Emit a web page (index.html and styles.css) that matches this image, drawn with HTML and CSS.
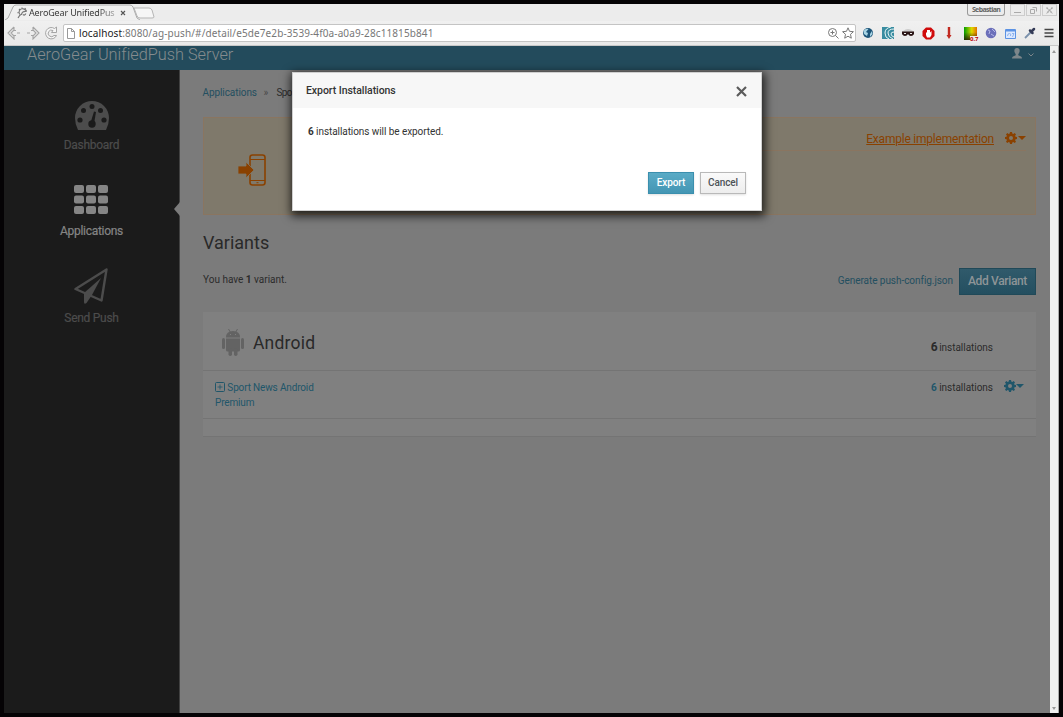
FILE: index.html
```html
<!DOCTYPE html>
<html lang="en">
<head>
<meta charset="utf-8">
<title>AeroGear UnifiedPush Server</title>
<link rel="stylesheet" href="styles.css">
</head>
<body>
<svg class="defs" width="0" height="0">
  <symbol id="gear" viewBox="0 0 12 12"><path fill-rule="evenodd" d="M5 0h2l.3 1.600 1 .4 1.400-.9 1.300 1.300-.9 1.400.4 1L12 5v2l-1.500.3-.4 1 .9 1.400-1.300 1.300-1.400-.9-1 .4L7 12H5l-.3-1.500-1-.4-1.400.9L1 9.700l.9-1.400-.4-1L0 7V5l1.500-.2.4-1L1 2.400l1.300-1.300 1.400.9 1-.4zM6 4a2 2 0 1 0 0 4 2 2 0 0 0 0-4z"/></symbol>
</svg>
<div class="window">
  <div class="tabstrip">
    <div class="tab">
      <svg class="tab-shape" width="142" height="16" viewBox="0 0 142 16"><path d="M0 16 3 14 8 3Q9 1 11 1H125Q127 1 128 3L132 14 135 16" fill="#f0f0f0" stroke="#aaa"/></svg>
      <div class="tab-content">
        <svg width="11" height="12" viewBox="0 0 11 12"><path d="M9.500 4.500C9 1.500 4 .7 2.500 3.500c-1 2 .2 4 1.500 4.700M1 11l2-3M4.500 8c0-3 2-4 5-3.500M6 7.500c1 1 2.500.5 2.700-1M.5 5.500l1 .5M2 2l1 1M5 .5v1.500M8.500 1 8 2" fill="none" stroke="#777" stroke-width="1.200"/></svg>
        <span class="tab-title">AeroGear UnifiedPus</span>
        <svg width="6" height="6" viewBox="0 0 6 6"><path d="M1 1l4 4M5 1 1 5" stroke="#555" stroke-width="1.100"/></svg>
      </div>
    </div>
    <svg class="newtab" width="22" height="12" viewBox="0 0 22 12"><path d="M1 1h15q2 0 3 2l2 7q0 1-2 1H7q-2 0-3-2z" fill="#f6f6f6" stroke="#b5b5b5"/></svg>
    <div class="spacer"></div>
    <div class="user-badge">Sebastian</div>
    <div class="winbtn"><svg width="9" height="9"><path d="M1 6.500h7" stroke="#aaa"/></svg></div>
    <div class="winbtn"><svg width="9" height="9" fill="none" stroke="#aaa"><path d="M1.500 3.500h4v4h-4zM3.500 1.500h4v4"/></svg></div>
    <div class="winbtn"><svg width="9" height="9"><path d="M1.500 1.500l6 6M7.500 1.500l-6 6" stroke="#aaa" stroke-width="1.500" stroke-dasharray="2 .7"/></svg></div>
  </div>
  <div class="toolbar">
    <div class="nav-icons">
      <svg width="14" height="14" viewBox="0 0 14 14"><path d="M7 1 1 7l6 6V9.500h2M7 1v3.500h2M7 4 4 7l3 3M10 7h3" fill="none" stroke="#a5a5a5" stroke-width="1.100"/></svg>
      <svg width="14" height="14" viewBox="0 0 14 14"><path d="M7 1l6 6-6 6V9.500H5M7 1v3.500H5M7 4l3 3-3 3M4 7H1" fill="none" stroke="#a5a5a5" stroke-width="1.100"/></svg>
      <svg width="14" height="14" viewBox="0 0 14 14"><path d="M10.500 2.500A5.700 5.700 0 1 0 12.500 9.500H10A3.300 3.300 0 1 1 9 4.500L7.500 6.500h5V1z" fill="#f6f6f6" stroke="#a5a5a5"/></svg>
    </div>
    <div class="omnibox">
      <svg width="8" height="11" viewBox="0 0 8 11"><path d="M.5.500h4l3 3v7h-7zM4.500.5v3h3" fill="#fff" stroke="#999"/></svg>
      <span class="url"><b>localhost</b>:8080/ag-push/#/detail/e5de7e2b-3539-4f0a-a0a9-28c11815b841</span>
      <svg width="11" height="11" viewBox="0 0 11 11" fill="none" stroke="#777"><circle cx="4.500" cy="4.500" r="4"/><path d="M7.500 7.500l3 3M2.500 4.500h4M4.500 2.500v4"/></svg>
      <svg width="12" height="12" viewBox="0 0 12 12"><path d="M6 .8l1.500 3.500 3.900.4-2.900 2.600.8 3.900L6 9.200l-3.300 2 .8-3.900L.6 4.700l3.900-.4z" fill="#fff" stroke="#777"/></svg>
    </div>
    <div class="extensions">
      <svg width="12" height="12" viewBox="0 0 12 12"><circle cx="6" cy="6" r="5" fill="#1c5478"/><path d="M1.500 4q2-3 5-2L4 5l2 1-1 3-3-2zM8 7l2-3 .5 3L8 10z" fill="#a8d4e4"/></svg>
      <svg width="12" height="12" viewBox="0 0 12 12"><path fill="#398ca0" d="M0 0h12v12H0z"/><path d="M12 2Q6 2 6 6t5 6M12 5Q9 5 9 7t3 3M9 0Q3 1 3 6t4 6" fill="none" stroke="#e8f5f5"/></svg>
      <svg width="12" height="12" viewBox="0 0 12 12"><path d="M1 4Q6 0 11 4l1 1v3H0V5z" fill="#ccc"/><path d="M0 4.500h12V7q-1 2-3 2-2 0-3-2-1 2-3 2T0 7z" fill="#2b1515"/><path d="M2 6.500h2M8 6.500h2" stroke="#eee"/></svg>
      <svg width="13" height="13" viewBox="0 0 13 13"><path d="M4 .5h5L12.500 4v5L9 12.500H4L.5 9V4z" fill="#d00b0b"/><path d="M4 5v3l1 2.500h3L9.500 8V4L8 5.500V3H5v3z" fill="#fff"/></svg>
      <svg width="12" height="12" viewBox="0 0 12 12"><path d="M4.800 0h2.400v8h1.300L6 12 3.500 8h1.300z" fill="#c22a20"/></svg>
      <div class="palette"><span>0.7</span></div>
      <svg width="12" height="12" viewBox="0 0 12 12"><circle cx="6" cy="6" r="5.300" fill="#6c70ba"/><path d="M3 3l2 1-1 3M7 2l3 3M6 7l3 2" stroke="#b5b8e8" fill="none"/></svg>
      <svg width="11" height="11" viewBox="0 0 11 11"><path d="M.5 1.500h10v9H.5z" fill="#dce9ff" stroke="#5c93e4"/><path d="M1 2.500h9" stroke="#5c93e4" stroke-width="2"/><path d="M2.500 8q0-2.500 2-2.500t1 2.500M7 5.500h2L7.500 9" fill="none" stroke="#8db3ee"/></svg>
      <svg width="12" height="12" viewBox="0 0 12 12"><path d="M1 11l6-6" stroke="#7b91ac" stroke-width="1.800"/><path d="M6 3.500 8.500 6M8 4l2-2" stroke="#333a55" stroke-width="2.500" stroke-linecap="round"/></svg>
      <svg width="10" height="10" viewBox="0 0 10 10"><path d="M.5 1.500h9M.5 5h9M.5 8.500h9" stroke="#444" stroke-width="1.700"/></svg>
    </div>
  </div>
  <div class="viewport">
    <div class="page">
      <header class="masthead">
        <span class="brand">AeroGear UnifiedPush Server</span>
        <div class="usermenu">
          <svg width="10" height="11" viewBox="0 0 10 11"><path d="M5 0q3 0 2.600 3.500Q7 5.500 6.300 6v1.200L9 8.500q1 .5 1 2H0q0-1.500 1-2l2.700-1.300V6Q3 5.500 2.400 3.500 2 0 5 0z" fill="#7d868a"/></svg>
          <svg width="6" height="4" viewBox="0 0 6 4"><path d="M.5.500 3 3 5.500.5" fill="none" stroke="#7d868a"/></svg>
        </div>
      </header>
      <div class="columns">
        <nav class="sidebar">
          <div class="nav-item dash">
            <svg width="34" height="29" viewBox="0 0 34 29"><path d="M3 29Q0 23 0 17a17 17 0 0 1 34 0q0 6-3 12z" fill="#4c4c4c"/><g fill="#1b1b1b"><circle cx="5" cy="19" r="2.600"/><circle cx="8.500" cy="9.500" r="2.500"/><circle cx="17" cy="5.500" r="2.500"/><circle cx="25.500" cy="9.500" r="2.500"/><circle cx="29" cy="19" r="2.600"/><circle cx="17" cy="23" r="3.700"/><path d="M15.500 22 19 10.500l2 .5-2 12z"/></g></svg>
            <span>Dashboard</span>
          </div>
          <div class="nav-item apps">
            <svg width="34" height="29" viewBox="0 0 34 29" fill="#858585"><rect width="10" height="8" rx="2"/><rect x="12" width="10" height="8" rx="2"/><rect x="24" width="10" height="8" rx="2"/><rect y="10.500" width="10" height="8" rx="2"/><rect x="12" y="10.500" width="10" height="8" rx="2"/><rect x="24" y="10.500" width="10" height="8" rx="2"/><rect y="21" width="10" height="8" rx="2"/><rect x="12" y="21" width="10" height="8" rx="2"/><rect x="24" y="21" width="10" height="8" rx="2"/></svg>
            <span>Applications</span>
          </div>
          <div class="nav-item send">
            <svg width="34" height="37" viewBox="0 0 34 37"><path d="M32.500 1.500 1.500 21l26 11.500z" fill="none" stroke="#4c4c4c" stroke-width="2.400" stroke-linejoin="round"/><path d="M27 10 10 25v9q0 3 2.500 1L18 27z" fill="#4c4c4c"/></svg>
            <span>Send Push</span>
          </div>
          <i class="pointer"></i>
        </nav>
        <main class="content">
          <div class="crumbs"><a>Applications</a><span class="sep">»</span><span>Spo</span></div>
          <section class="notice">
            <svg class="phone" width="28" height="32" viewBox="0 0 28 32"><rect x="12" y="1" width="15" height="30" rx="2.500" fill="none" stroke="#8a4100" stroke-width="1.600"/><path d="M12 5.500h15M12 26.500h15M18.500 28.700h2" stroke="#8a4100"/><path d="M0 12h8V8l8 8-8 8v-4H0z" fill="#8a4100" stroke="#7f796b" stroke-width=".8"/></svg>
            <div class="notice-body">
              <a class="example">Example implementation</a>
              <svg class="gear" width="12" height="12"><use href="#gear"/></svg>
              <i class="caret"></i>
            </div>
          </section>
          <h1>Variants</h1>
          <div class="summary">
            <span class="count">You have <b>1</b> variant.</span>
            <a class="generate">Generate push-config.json</a>
            <button class="add">Add Variant</button>
          </div>
          <section class="panel">
            <div class="panel-head">
              <svg width="22" height="27" viewBox="0 0 22 27" fill="#636363"><path d="M4 8.500Q4 2 11 2t7 6.500zM4 9.500h14V21q0 1.500-1.500 1.500h-11Q4 22.500 4 21z"/><rect y="9" width="3" height="11" rx="1.500"/><rect x="19" y="9" width="3" height="11" rx="1.500"/><rect x="6.500" y="19" width="3.500" height="8" rx="1.700"/><rect x="12" y="19" width="3.500" height="8" rx="1.700"/><path d="M6.500 0l2 3.500M15.500 0l-2 3.500" stroke="#636363"/><path d="M8 5.500h1M13 5.500h1" stroke="#808080"/></svg>
              <h2>Android</h2>
              <span class="installs big"><b>6</b> <span>installations</span></span>
            </div>
            <div class="panel-row">
              <a class="variant"><svg width="10" height="10" viewBox="0 0 10 10"><rect x=".5" y=".5" width="9" height="9" rx="1" fill="none" stroke="#20566a"/><path d="M2.500 5h5M5 2.500v5" stroke="#20566a" stroke-width=".8"/></svg> <span class="line1">Sport News Android</span><br><span class="line2">Premium</span></a>
              <span class="installs"><b>6</b> <span>installations</span></span>
              <svg class="gear" width="12" height="12"><use href="#gear"/></svg>
              <i class="caret"></i>
            </div>
            <div class="panel-foot"></div>
          </section>
        </main>
      </div>
      <div class="modal" role="dialog">
        <div class="modal-head"><span>Export Installations</span>
          <svg width="11" height="11" viewBox="0 0 11 11"><path d="M1 1l9 9M10 1l-9 9" stroke="#5b5b5b" stroke-width="2.200"/></svg>
        </div>
        <div class="modal-body"><b>6</b> <span>installations will be exported.</span></div>
        <div class="modal-foot"><button class="primary">Export</button><button class="cancel">Cancel</button></div>
      </div>
    </div>
    <div class="scrollbar"><i class="up"></i><i class="down"></i></div>
  </div>
</div>
</body>
</html>
```

FILE: styles.css
```css
* { box-sizing: border-box; }
body { margin: 0; background: #050305; font-family: Roboto, "Open Sans", sans-serif; }
svg { display: block; flex: none; }
.defs { position: absolute; }
span, a, h1, h2 { white-space: nowrap; }
b { font-weight: 700; }
button { font-family: inherit; margin: 0; padding: 0; white-space: nowrap; }

.window { width: 1063px; height: 717px; padding: 4px; display: flex; flex-direction: column; overflow: hidden; }
.tabstrip { height: 17px; background: #ececec; display: flex; align-items: flex-start; padding-right: 2px; }
.tab { width: 132px; height: 17px; display: grid; margin-left: 2px; }
.tab-shape, .tab-content { grid-area: 1 / 1; }
.tab-shape { margin-left: -1px; }
.tab-content { display: flex; align-items: center; padding: 0 0 0 11px; height: 17px; z-index: 1; }
.tab-title { font: 9px/12px "Noto Sans", sans-serif; width: 86px; margin: 0 5px 0 1px; letter-spacing: -.15px; color: transparent; background: linear-gradient(90deg, #333 80%, #aaa); background-clip: text; -webkit-background-clip: text; }
.newtab { margin: 3px 0 0 -5px; z-index: 1; }
.spacer { flex: 1; }
.user-badge { width: 38px; height: 12px; border: 1px solid #999; border-top: 0; border-radius: 0 0 3px 3px; font: 700 7px/12px "Noto Sans", sans-serif; letter-spacing: -.65px; color: #666; text-align: center; margin-right: 4px; }
.winbtn { width: 15px; height: 12px; border: 1px solid #ccc; margin-left: 1px; padding: 1px 2px; }
.toolbar { height: 25px; background: linear-gradient(#f0f0f0, #e9e9e9); border-bottom: 1px solid #c8c8c8; display: flex; align-items: center; }
.nav-icons { display: flex; gap: 4.500px; padding: 0 0 0 3px; width: 59px; }
.omnibox { width: 793px; height: 18px; border: 1px solid #c4c4c4; border-radius: 2px; background: #fff; display: flex; align-items: center; padding: 0 1px 0 3px; gap: 3px; }
.url { flex: 1; font: 10px/14px "Noto Sans", sans-serif; color: #777; letter-spacing: .11px; margin-left: 1px; }
.url b { font-weight: 400; color: #222; }
.extensions { flex: 1; display: flex; align-items: center; justify-content: space-between; padding: 0 5px 0 6px; }
.palette { width: 13px; height: 13px; background: linear-gradient(0deg, rgba(40,15,0,.8), transparent 60%), linear-gradient(90deg, #009f00, #e0d800 60%, #e07000); display: flex; align-items: flex-end; justify-content: flex-end; }
.palette span { background: #eee; color: #b00; font: 700 6px/6px "Noto Sans", sans-serif; margin: 0 -2px -2px 0; }

.viewport { flex: 1; display: flex; min-height: 0; }
.page { width: 1046px; position: relative; background: #7b7b7b; display: flex; flex-direction: column; }
.scrollbar { flex: 1; background: #f0f0f0; border-right: 1px solid #aaa; display: flex; flex-direction: column; justify-content: space-between; align-items: center; padding: 4px 0 3px; }
.scrollbar i { width: 0; border: 2px solid transparent; }
.scrollbar .up { border-bottom: 3px solid #999; border-top: 0; }
.scrollbar .down { border-top: 3px solid #999; border-bottom: 0; }
.masthead { height: 24px; flex: none; background: #234b5c; display: flex; justify-content: space-between; padding: 0 16px 0 23px; }
.brand { font-size: 16.300px; line-height: 17px; font-weight: 300; color: #858b8e; letter-spacing: .01px; }
.usermenu { display: flex; gap: 6px; padding-top: 2px; }
.usermenu svg:last-child { margin-top: 5px; }
.columns { flex: 1; display: flex; }
.sidebar { width: 176px; background: #1b1b1b; border-right: 1px solid #414141; position: relative; display: flex; flex-direction: column; align-items: center; padding-top: 31px; }
.nav-item { height: 84px; display: flex; flex-direction: column; align-items: center; font-size: 12px; letter-spacing: -.28px; color: #4c4c4c; }
.nav-item span { line-height: 16px; margin-top: 7px; -webkit-text-stroke: .2px; }
.apps { color: #858585; height: 83px; }
.apps span { margin-top: 9px; }
.send span { margin-top: 5px; }
.pointer { position: absolute; right: -1px; top: 132px; border: 7px solid transparent; border-right: 6px solid #7b7b7b; border-left: 0; }
.content { flex: 1; padding: 15px 14px 0 23px; font-size: 10px; color: #2b2b2b; display: flex; flex-direction: column; }
.crumbs { height: 16px; line-height: 16px; display: flex; margin-left: -.5px; }
.crumbs a { color: #234f60; width: 61px; letter-spacing: -.08px; }
.crumbs .sep { color: #4a4a4a; width: 13px; }
.crumbs span:last-child { letter-spacing: -.7px; width: 14px; }
.notice { height: 98px; margin-top: 16px; border: 1px solid #8a7560; background: #7f796b; display: flex; padding: 0 9px 0 35px; }
.phone { margin-top: 36px; margin-left: -1px; }
.notice-body { flex: 1; margin-left: 41px; height: 33px; border-bottom: 1px solid #8a7560; display: flex; justify-content: flex-end; padding-top: 13px; color: #8a4100; }
.example { font-size: 12px; line-height: 16px; text-decoration: underline; letter-spacing: -.22px; margin-right: 11px; }
.gear { fill: currentColor; }
.caret { width: 0; height: 0; border: 4px solid transparent; border-top-color: currentColor; border-bottom: 0; margin: 4px 0 0 2px; flex: none; }
.notice .gear { margin-top: 1px; }
.notice .caret { margin-top: 5px; margin-left: 1px; }
h1, h2 { font-weight: 400; margin: 0; color: #292929; }
h1 { font-size: 18px; line-height: 24px; margin-top: 16px; letter-spacing: 0; }
.summary { display: flex; align-items: center; height: 28px; margin-top: 12px; }
.count { flex: 1; line-height: 14px; margin-top: -2px; }
.generate { color: #234f60; letter-spacing: -.05px; margin-right: 6px; margin-top: -1px; }
.add { width: 77px; height: 27px; border: 1px solid #204958; background: linear-gradient(#305a6b, #244f60); color: #8e9497; font-size: 12px; font-weight: 500; letter-spacing: -.35px; }
.panel { margin-top: 17px; background: #808080; height: 125px; border-bottom: 1px solid #747474; }
.panel-head { height: 59px; border-bottom: 1px solid #747474; display: flex; padding: 17px 43px 0 19px; }
h2 { font-size: 17.500px; line-height: 28px; margin-left: 9px; letter-spacing: .2px; flex: 1; }
.installs { letter-spacing: -.03px; color: #2b2b2b; }
.big { margin-top: 10px; line-height: 16px; }
.big b { font-size: 12px; margin-right: -1px; }
.panel-row { height: 48px; border-bottom: 1px solid #747474; display: flex; padding: 9px 12px 0 12px; color: #20566a; line-height: 15px; }
.variant { flex: 1; letter-spacing: -.15px; }
.variant svg { display: inline-block; vertical-align: -1px; }
.panel-row .installs b { color: #20566a; }
.panel-row .gear { margin-left: 11px; }
.panel-row .caret { margin-left: 0; }

.modal { position: absolute; left: 288px; top: 26px; width: 470px; height: 139px; border: 1px solid #d0d0d0; background: #fff; box-shadow: 1px 3px 9px 2px rgba(0,0,0,.75); font-size: 10px; color: #333; }
.modal-head { height: 35px; background: #f7f7f7; display: flex; justify-content: space-between; align-items: center; padding: 0 14px 0 13px; font-weight: 500; font-size: 10.500px; letter-spacing: -.06px; }
.modal-head svg { margin-top: 1px; }
.modal-body { height: 64px; padding: 17px 15px 0; line-height: 14px; letter-spacing: -.07px; }
.modal-foot { display: flex; gap: 6px; justify-content: flex-end; padding-right: 15px; }
.modal-foot button { width: 46px; height: 22px; padding-bottom: 1px; font-size: 10px; font-weight: 500; letter-spacing: -.1px; box-shadow: 0 1px 2px rgba(0,0,0,.12); }
.modal-foot .primary { border: 1px solid #3b8fae; background: linear-gradient(#5aabc6, #4496b4); color: #fff; }
.modal-foot .cancel { border: 1px solid #b9b9b9; background: linear-gradient(#fafafa, #ededed); color: #4d5258; }
```
